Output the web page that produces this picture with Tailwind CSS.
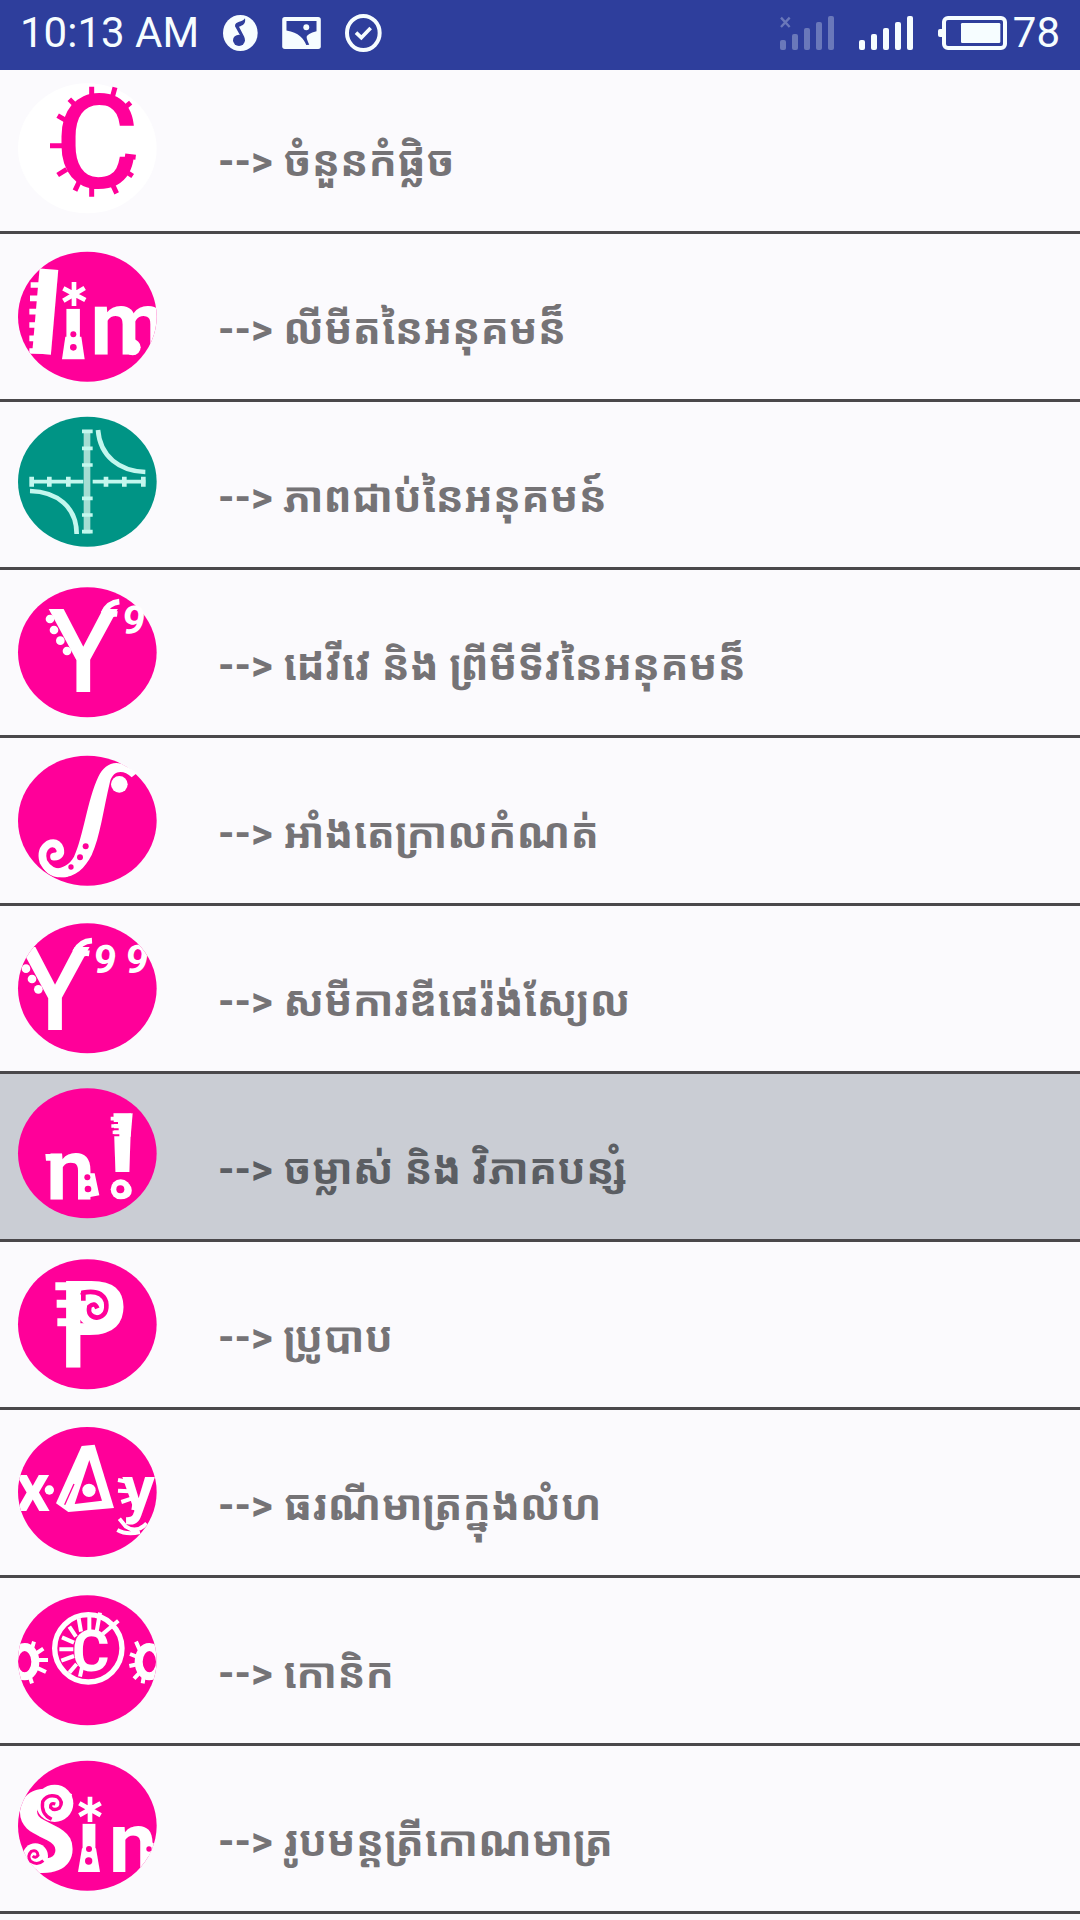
<!DOCTYPE html>
<html lang="km">
<head>
    <meta charset="UTF-8">
    <meta name="viewport" content="width=device-width, initial-scale=1.0">
    <title>មេរៀនគណិតវិទ្យា</title>
    <script src="https://cdn.jsdelivr.net/npm/@tailwindcss/browser@4"></script>
</head>
<body class="min-h-screen bg-[#fbfafd] font-['Roboto','Noto_Sans_Khmer','Noto_Sans',sans-serif] overflow-x-hidden">

    <!-- Status bar -->
    <header class="relative z-10 flex h-[70px] items-center justify-between bg-[#2e3e9c] px-5 pb-1 text-[42px] leading-none text-[#f6fdff]">
        <div class="flex items-center gap-6">
            <span>10:13 AM</span>
            <svg class="h-9 w-[35px]" viewBox="0 0 105 108" fill="currentColor">
                <ellipse cx="52" cy="54" rx="52" ry="54"/>
                <g fill="#2e3e9c">
                    <ellipse cx="48" cy="76" rx="18" ry="17"/>
                    <path d="M36 34C35 18 60 22 66 10C69 26 60 32 48 35L64 66L62 84L54 66Z"/>
                </g>
            </svg>
            <svg class="h-8 w-[39px]" viewBox="0 0 117 97" fill="currentColor">
                <rect width="117" height="97" rx="8"/>
                <path fill="#2e3e9c" d="M13 12H104V43Q75 51 74 60Q74 68 82 84L73 85C66 66 50 47 13 41Z"/>
                <circle cx="73" cy="31" r="9"/>
            </svg>
            <svg class="h-[38px] w-[37px]" viewBox="0 0 111 114" fill="none" stroke="currentColor">
                <ellipse cx="55" cy="57" rx="49" ry="51" stroke-width="12"/>
                <path d="M33 56L49 71L77 42" stroke-width="11"/>
            </svg>
        </div>
        <div class="flex items-center gap-6">
            <svg class="h-[34px] w-[55px] opacity-30" viewBox="0 0 165 102" fill="currentColor">
                <path d="M3 5L29 33M29 5L3 33" stroke="currentColor" stroke-width="7"/>
                <rect x="0" y="72" width="18" height="30" rx="6"/>
                <rect x="36" y="54" width="18" height="48" rx="6"/>
                <rect x="72" y="36" width="18" height="66" rx="6"/>
                <rect x="108" y="18" width="18" height="84" rx="6"/>
                <rect x="144" y="0" width="18" height="102" rx="6"/>
            </svg>
            <svg class="h-[34px] w-[55px]" viewBox="0 0 165 102" fill="currentColor">
                <rect x="0" y="72" width="18" height="30" rx="6"/>
                <rect x="36" y="54" width="18" height="48" rx="6"/>
                <rect x="72" y="36" width="18" height="66" rx="6"/>
                <rect x="108" y="18" width="18" height="84" rx="6"/>
                <rect x="144" y="0" width="18" height="102" rx="6"/>
            </svg>
            <div class="flex items-center gap-[6px]">
                <svg class="h-[34px] w-[69px]" viewBox="0 0 207 102" fill="currentColor">
                    <rect x="18" y="6" width="183" height="90" rx="12" fill="none" stroke="currentColor" stroke-width="12"/>
                    <rect x="0" y="39" width="20" height="24" rx="6"/>
                    <rect x="69" y="21" width="118" height="60" rx="4"/>
                </svg>
                <span>78</span>
            </div>
        </div>
    </header>

    <!-- Lesson list, scrolled a little under the status bar -->
    <main class="-mt-1">
        <ul class="text-[42px] font-bold text-[#757376]">
            <li class="border-b-3 border-[#4a484b]">
                <a href="#complex" class="flex h-[165px] items-center">
                    <svg class="h-[165px] w-[200px] shrink-0" viewBox="0 -12 600 495" fill="#ff0099">
                        <ellipse cx="262" cy="235" rx="208" ry="195" fill="#ffffff"/>
                        <text x="290" y="352" font-size="385" font-weight="400" text-anchor="middle" stroke="#ff0099" stroke-width="6">C</text>
                        <path stroke="#ff0099" stroke-width="15" d="M275 50V85M345 52L336 85M392 98L368 118M407 262L375 258M398 318L370 300M350 370L336 340M275 380V345M225 362L240 330M173 315L200 298M150 227H190M173 137L204 155M208 88L232 112"/>
                    </svg>
                    <span class="mt-[26px] ml-[18px]">--&gt; ចំនួនកំផ្លិច</span>
                </a>
            </li>
            <li class="border-b-3 border-[#4a484b]">
                <a href="#limit" class="flex h-[165px] items-center">
                    <svg class="h-[165px] w-[200px] shrink-0" viewBox="0 492 600 495" fill="#ffffff">
                        <clipPath id="limit-disc"><ellipse cx="262" cy="740" rx="208" ry="195"/></clipPath>
                        <ellipse cx="262" cy="740" rx="208" ry="195" fill="#ff0099"/>
                        <g clip-path="url(#limit-disc)">
                            <text x="125" y="852" font-size="340" font-weight="900" text-anchor="middle" transform="rotate(5 130 850)">l</text>
                            <text x="220" y="868" font-size="285" font-weight="700" text-anchor="middle">ı</text>
                            <text x="270" y="855" font-size="270" font-weight="700">m</text>
                            <path stroke="#ffffff" stroke-width="17" d="M92 645H135M90 685H135M88 725H130M88 765H130M88 805H125M88 843H150"/>
                            <path stroke="#ffffff" stroke-width="14" d="M222 636V708M190 655L256 690M190 692L254 654"/>
                            <path d="M196 800L186 868H254L244 800Z"/>
                            <circle cx="398" cy="832" r="24"/>
                        </g>
                        <g fill="#ff0099"><circle cx="220" cy="793" r="9"/><circle cx="220" cy="832" r="10"/></g>
                    </svg>
                    <span class="mt-[26px] ml-[18px]">--&gt; លីមីតនៃអនុគមន៏</span>
                </a>
            </li>
            <li class="border-b-3 border-[#4a484b]">
                <a href="#continuity" class="flex h-[165px] items-center">
                    <svg class="h-[165px] w-[200px] shrink-0" viewBox="0 6 600 495" fill="none" stroke="#c3f7ee">
                        <ellipse cx="262" cy="245" rx="208" ry="195" fill="#009485" stroke="none"/>
                        <path stroke="#a5ddd3" stroke-width="20" d="M261 90V400"/>
                        <path stroke-width="11" d="M90 245H250M278 245H436M246 94H278M246 145H278M246 195H278M246 295H278M246 345H278M246 395H278"/>
                        <path stroke-width="14" d="M95 230V260M148 230V260M205 230V260M318 230V260M373 230V260M430 230V260"/>
                        <path stroke-width="14" d="M294 90C300 170 360 214 436 216M90 273C170 275 230 320 230 402"/>
                    </svg>
                    <span class="mt-[26px] ml-[18px]">--&gt; ភាពជាប់នៃអនុគមន៍</span>
                </a>
            </li>
            <li class="border-b-3 border-[#4a484b]">
                <a href="#derivative" class="flex h-[165px] items-center">
                    <svg class="h-[165px] w-[200px] shrink-0" viewBox="0 510 600 495" fill="#ffffff">
                        <ellipse cx="262" cy="757" rx="208" ry="195" fill="#ff0099"/>
                        <text x="250" y="876" font-size="350" font-weight="600" text-anchor="middle" class="font-['Open_Sans']">Y</text>
                        <text x="366" y="702" font-size="120" font-weight="700" transform="rotate(10 397 665)">9</text>
                        <path fill="none" stroke="#ffffff" stroke-width="17" d="M310 640Q325 608 358 605M300 665Q322 638 352 642"/>
                        <circle cx="150" cy="657" r="13"/><circle cx="162" cy="690" r="13"/><circle cx="181" cy="722" r="13"/><circle cx="201" cy="753" r="13"/>
                    </svg>
                    <span class="mt-[26px] ml-[18px]">--&gt; ដេវីវេ និង ព្រីមីទីវនៃអនុគមន៏</span>
                </a>
            </li>
            <li class="border-b-3 border-[#4a484b]">
                <a href="#integral" class="flex h-[165px] items-center">
                    <svg class="h-[165px] w-[200px] shrink-0" viewBox="0 -6 600 495" fill="#ffffff">
                        <ellipse cx="262" cy="242" rx="208" ry="195" fill="#ff0099"/>
                        <path d="M185 412C150 412 130 395 122 365C150 395 198 392 222 350C250 290 262 180 295 110C310 80 335 62 365 72L412 98L395 112C370 88 340 90 330 125C310 210 300 290 275 345C255 385 225 412 185 412Z"/>
                        <path fill="none" stroke="#ffffff" stroke-width="23" stroke-linecap="round" d="M162 350Q186 348 180 326Q170 303 145 313Q120 330 130 365Q150 402 195 400"/>
                        <circle cx="358" cy="133" r="25"/>
                        <g fill="#ff0099"><circle cx="213" cy="381" r="8"/><circle cx="240" cy="352" r="9"/><circle cx="257" cy="319" r="9"/></g>
                    </svg>
                    <span class="mt-[26px] ml-[18px]">--&gt; អាំងតេក្រាលកំណត់</span>
                </a>
            </li>
            <li class="border-b-3 border-[#4a484b]">
                <a href="#differential" class="flex h-[165px] items-center">
                    <svg class="h-[165px] w-[200px] shrink-0" viewBox="0 498 600 495" fill="#ffffff">
                        <clipPath id="differential-disc"><ellipse cx="262" cy="745" rx="208" ry="195"/></clipPath>
                        <ellipse cx="262" cy="745" rx="208" ry="195" fill="#ff0099"/>
                        <g clip-path="url(#differential-disc)">
                            <text x="165" y="870" font-size="350" font-weight="600" text-anchor="middle" class="font-['Open_Sans']">Y</text>
                            <text x="280" y="700" font-size="120" font-weight="700" transform="rotate(10 312 660)">9</text>
                            <text x="376" y="700" font-size="120" font-weight="700" transform="rotate(10 408 660)">9</text>
                            <path fill="none" stroke="#ffffff" stroke-width="17" d="M225 636Q240 604 276 602M215 662Q237 635 268 640"/>
                            <circle cx="78" cy="686" r="13"/><circle cx="96" cy="717" r="13"/><circle cx="115" cy="748" r="13"/>
                        </g>
                    </svg>
                    <span class="mt-[26px] ml-[18px]">--&gt; សមីការឌីផេរ៉ង់ស្យែល</span>
                </a>
            </li>
            <li class="border-b-3 border-[#4a484b] bg-[#cacdd4] text-[#5b5e63]">
                <a href="#combinatorics" aria-current="true" class="flex h-[165px] items-center">
                    <svg class="h-[165px] w-[200px] shrink-0" viewBox="0 12 600 495" fill="#ffffff">
                        <ellipse cx="262" cy="250" rx="208" ry="195" fill="#ff0099"/>
                        <text x="138" y="390" font-size="262" font-weight="700">n</text>
                        <text x="366" y="385" font-size="355" font-weight="700" text-anchor="middle">!</text>
                        <path d="M136 252H165V272H138ZM240 310H284L298 376L236 388Z"/>
                        <path stroke="#ffffff" stroke-width="11" d="M332 146H370M334 168H370M338 187H370"/>
                        <path d="M345 138L398 130L392 200H350Z"/>
                        <circle cx="362" cy="358" r="30"/>
                        <g fill="#ff0099"><circle cx="262" cy="322" r="9"/><circle cx="264" cy="357" r="10"/><circle cx="361" cy="358" r="12"/></g>
                        <path stroke="#ff0099" stroke-width="6" d="M332 159H354M334 178H356M336 196H358"/>
                    </svg>
                    <span class="mt-[26px] ml-[18px]">--&gt; ចម្លាស់ និង វិភាគបន្សំ</span>
                </a>
            </li>
            <li class="border-b-3 border-[#4a484b]">
                <a href="#probability" class="flex h-[165px] items-center">
                    <svg class="h-[165px] w-[200px] shrink-0" viewBox="0 516 600 495" fill="#ffffff">
                        <ellipse cx="262" cy="763" rx="208" ry="195" fill="#ff0099"/>
                        <text x="164" y="895" font-size="364" font-weight="600" class="font-['Open_Sans']">P</text>
                        <ellipse cx="290" cy="712" rx="62" ry="62"/>
                        <path stroke="#ffffff" stroke-width="24" d="M166 649H220M170 701H220M172 757H220"/>
                        <path fill="none" stroke="#ff0099" stroke-width="14" d="M250 692V668Q305 658 318 695Q325 738 290 743Q262 738 268 710Q284 695 292 715"/>
                    </svg>
                    <span class="mt-[26px] ml-[18px]">--&gt; ប្រូបាប</span>
                </a>
            </li>
            <li class="border-b-3 border-[#4a484b]">
                <a href="#geometry" class="flex h-[165px] items-center">
                    <svg class="h-[165px] w-[200px] shrink-0" viewBox="0 0 600 495" fill="#ffffff">
                        <clipPath id="geometry-disc"><ellipse cx="262" cy="246" rx="208" ry="195"/></clipPath>
                        <ellipse cx="262" cy="246" rx="208" ry="195" fill="#ff0099"/>
                        <g clip-path="url(#geometry-disc)">
                            <text x="98" y="302" font-size="205" font-weight="700" text-anchor="middle">x</text>
                            <text x="416" y="302" font-size="195" font-weight="700" text-anchor="middle">y</text>
                            <path fill="none" stroke="#ffffff" stroke-width="12" d="M354 210L386 216M354 242L388 244M364 276L394 266M400 300L404 276M358 326L378 350Q410 372 440 340M352 360Q380 376 420 366"/>
                        </g>
                        <circle cx="148" cy="240" r="14"/>
                        <path d="M245 108L284 104L342 294L205 306L168 280Z"/>
                        <path fill="#ff0099" d="M268 150L306 272L224 282Z"/>
                        <path fill="none" stroke="#ff0099" stroke-width="4" d="M222 222L194 284"/>
                        <circle cx="267" cy="241" r="20"/>
                    </svg>
                    <span class="mt-[26px] ml-[18px]">--&gt; ធរណីមាត្រក្នុងលំហ</span>
                </a>
            </li>
            <li class="border-b-3 border-[#4a484b]">
                <a href="#conics" class="flex h-[165px] items-center">
                    <svg class="h-[165px] w-[200px] shrink-0" viewBox="0 504 600 495" fill="none" stroke="#ffffff">
                        <clipPath id="conics-disc"><ellipse cx="262" cy="751" rx="208" ry="195"/></clipPath>
                        <ellipse cx="262" cy="751" rx="208" ry="195" fill="#ff0099" stroke="none"/>
                        <circle cx="265" cy="715" r="101" stroke-width="16"/>
                        <text x="272" y="782" font-size="172" font-weight="700" text-anchor="middle" fill="#ffffff" stroke="none">C</text>
                        <path stroke-width="12" d="M236 625L243 665M268 615V660M300 608L290 665M355 632L308 672M208 650L228 680M186 682L222 698M178 718H220M184 752L222 738M208 788L230 762M240 800L246 772"/>
                        <g clip-path="url(#conics-disc)">
                            <ellipse cx="74" cy="755" rx="32" ry="44" stroke-width="24"/>
                            <ellipse cx="448" cy="755" rx="32" ry="44" stroke-width="24"/>
                            <path stroke-width="12" d="M102 695L94 722M130 716L106 732M144 750H110M138 786L108 772M96 820L88 795M408 695L420 722M390 732L416 742M388 768L416 762M402 806L422 785M428 820L432 795"/>
                        </g>
                    </svg>
                    <span class="mt-[26px] ml-[18px]">--&gt; កោនិក</span>
                </a>
            </li>
            <li class="border-b-3 border-[#4a484b]">
                <a href="#trigonometry" class="flex h-[165px] items-center">
                    <svg class="h-[165px] w-[200px] shrink-0" viewBox="0 18 600 495" fill="#ffffff">
                        <clipPath id="trigonometry-disc"><ellipse cx="262" cy="257" rx="208" ry="195"/></clipPath>
                        <ellipse cx="262" cy="257" rx="208" ry="195" fill="#ff0099"/>
                        <g clip-path="url(#trigonometry-disc)">
                            <text x="136" y="396" font-size="345" font-weight="700" text-anchor="middle" class="font-['Open_Sans']">S</text>
                            <text x="267" y="395" font-size="270" font-weight="700" text-anchor="middle">ı</text>
                            <text x="326" y="395" font-size="258" font-weight="700">n</text>
                            <circle cx="164" cy="190" r="56"/>
                            <circle cx="106" cy="348" r="38"/>
                            <path stroke="#ffffff" stroke-width="14" d="M270 170V246M238 190L302 226M238 226L302 190"/>
                            <path d="M246 325L234 396H300L288 325Z"/>
                            <circle cx="447" cy="327" r="22"/>
                        </g>
                        <path fill="none" stroke="#ff0099" stroke-width="10" d="M166 192Q150 187 152 202Q162 214 178 204Q192 185 172 170Q142 160 128 185Q122 222 155 238"/>
                        <path fill="none" stroke="#ff0099" stroke-width="9" d="M98 348Q106 356 114 346Q112 328 94 334Q80 348 92 364Q112 378 130 362"/>
                        <g fill="#ff0099"><circle cx="267" cy="327" r="9"/><circle cx="266" cy="363" r="11"/><circle cx="447" cy="327" r="8"/></g>
                    </svg>
                    <span class="mt-[26px] ml-[18px]">--&gt; រូបមន្តត្រីកោណមាត្រ</span>
                </a>
            </li>
        </ul>
    </main>
</body>
</html>
